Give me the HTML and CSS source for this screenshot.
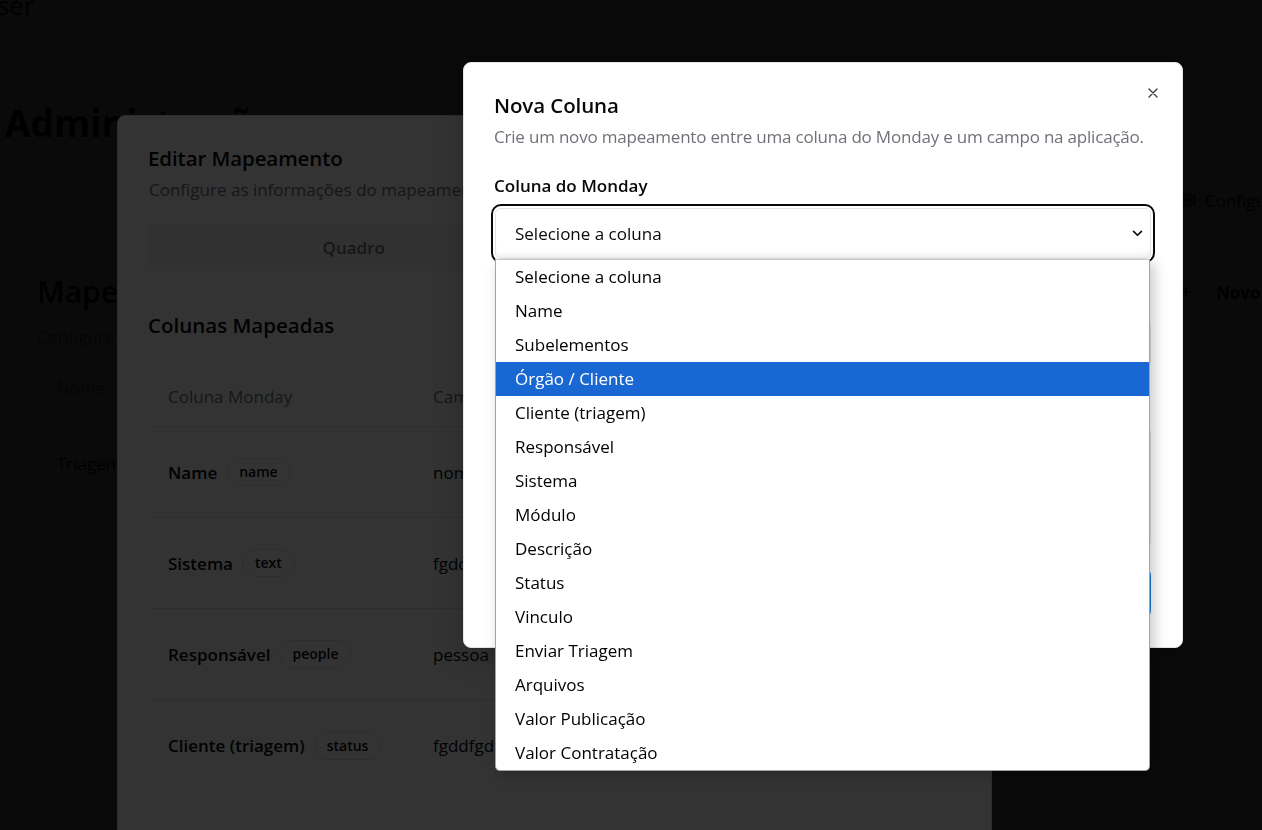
FILE: index.html
```html
<!DOCTYPE html>
<html lang="pt-BR">
<head>
<meta charset="utf-8">
<title>Administração - Mapeamentos</title>
<link rel="stylesheet" href="styles.css">
</head>
<body>
<div class="page">
  <div class="topline">User</div>
  <h1 class="page-title">Administração</h1>
  <div class="nav-row">
    <div class="nav-left"></div>
    <div class="nav-item">
      <svg class="ico" viewBox="0 0 24 24" width="16" height="16" fill="none" stroke="currentColor" stroke-width="2" stroke-linecap="round" stroke-linejoin="round"><path d="M12.22 2h-.44a2 2 0 0 0-2 2v.18a2 2 0 0 1-1 1.73l-.43.25a2 2 0 0 1-2 0l-.15-.08a2 2 0 0 0-2.73.73l-.22.38a2 2 0 0 0 .73 2.73l.15.1a2 2 0 0 1 1 1.72v.51a2 2 0 0 1-1 1.74l-.15.09a2 2 0 0 0-.73 2.73l.22.38a2 2 0 0 0 2.73.73l.15-.08a2 2 0 0 1 2 0l.43.25a2 2 0 0 1 1 1.73V20a2 2 0 0 0 2 2h.44a2 2 0 0 0 2-2v-.18a2 2 0 0 1 1-1.73l.43-.25a2 2 0 0 1 2 0l.15.08a2 2 0 0 0 2.73-.73l.22-.39a2 2 0 0 0-.73-2.73l-.15-.08a2 2 0 0 1-1-1.74v-.5a2 2 0 0 1 1-1.74l.15-.09a2 2 0 0 0 .73-2.73l-.22-.38a2 2 0 0 0-2.73-.73l-.15.08a2 2 0 0 1-2 0l-.43-.25a2 2 0 0 1-1-1.73V4a2 2 0 0 0-2-2z"/><circle cx="12" cy="12" r="3"/></svg>
      <span>Configurações</span>
    </div>
  </div>
  <section class="card">
    <div class="card-head">
      <div class="card-titles">
        <h2 class="card-title">Mapeamentos</h2>
        <p class="card-sub">Configure os mapeamentos entre quadros do Monday e a aplicação.</p>
      </div>
      <div class="new-btn">
        <svg class="ico" viewBox="0 0 24 24" width="16" height="16" fill="none" stroke="currentColor" stroke-width="2" stroke-linecap="round"><path d="M5 12h14M12 5v14"/></svg>
        <span>Novo Mapeamento</span>
      </div>
    </div>
    <div class="bg-table">
      <div class="bg-row bg-head"><span>Nome</span><span>Quadro</span></div>
      <div class="bg-row"><span>Triagem</span><span>1234567890</span></div>
    </div>
  </section>
</div>

<div class="overlay"></div>

<div class="dialog edit-dialog">
  <h2 class="dlg-title">Editar Mapeamento</h2>
  <p class="dlg-sub">Configure as informações do mapeamento e suas colunas.</p>
  <div class="tabs">
    <div class="tab">Quadro</div>
    <div class="tab active">Colunas</div>
  </div>
  <h3 class="section-title">Colunas Mapeadas</h3>
  <div class="map-table">
    <div class="mrow mhead"><span>Coluna Monday</span><span>Campo</span><span>Ações</span></div>
    <div class="mrow"><span class="mcell"><b>Name</b><i class="badge">name</i></span><span>nome</span><span></span></div>
    <div class="mrow"><span class="mcell"><b>Sistema</b><i class="badge">text</i></span><span>fgddfgdfgdfg</span><span></span></div>
    <div class="mrow"><span class="mcell"><b>Responsável</b><i class="badge">people</i></span><span>pessoa</span><span></span></div>
    <div class="mrow last"><span class="mcell"><b>Cliente (triagem)</b><i class="badge">status</i></span><span>fgddfgdfgdfg</span><span></span></div>
  </div>
</div>

<div class="overlay"></div>

<div class="dialog nova-dialog">
  <button class="close" aria-label="Fechar">
    <svg viewBox="0 0 24 24" width="16" height="16" fill="none" stroke="currentColor" stroke-width="2" stroke-linecap="round"><path d="M18 6 6 18M6 6l12 12"/></svg>
  </button>
  <h2 class="dlg-title">Nova Coluna</h2>
  <p class="dlg-sub tight">Crie um novo mapeamento entre uma coluna do Monday e um campo na aplicação.</p>
  <div class="form">
    <div class="field">
      <label class="label">Coluna do Monday</label>
      <div class="select-wrap">
        <div class="select">
          <span>Selecione a coluna</span>
          <svg class="chev" viewBox="0 0 12 8" width="11" height="7" fill="none" stroke="currentColor" stroke-width="2" stroke-linecap="round" stroke-linejoin="round"><path d="M1.5 1.5 6 6l4.5-4.5"/></svg>
        </div>
        <ul class="listbox" role="listbox">
          <li>Selecione a coluna</li>
          <li>Name</li>
          <li>Subelementos</li>
          <li class="hl">Órgão / Cliente</li>
          <li>Cliente (triagem)</li>
          <li>Responsável</li>
          <li>Sistema</li>
          <li>Módulo</li>
          <li>Descrição</li>
          <li>Status</li>
          <li>Vinculo</li>
          <li>Enviar Triagem</li>
          <li>Arquivos</li>
          <li>Valor Publicação</li>
          <li>Valor Contratação</li>
        </ul>
      </div>
    </div>
    <div class="field">
      <label class="label">Campo na Aplicação</label>
      <div class="input"></div>
    </div>
    <div class="field">
      <label class="label">Descrição</label>
      <div class="textarea"></div>
    </div>
    <div class="footer">
      <div class="btn outline">Cancelar</div>
      <div class="btn primary">Criar Coluna</div>
    </div>
  </div>
</div>
</body>
</html>
```
FILE: styles.css
```css
* { box-sizing: border-box; }
html, body { margin: 0; padding: 0; }
body {
  font-family: "Open Sans", "Noto Sans", sans-serif;
  color: #09090b;
  background: #ffffff;
  width: 1262px;
  height: 830px;
  overflow: hidden;
}

/* ---------- background page ---------- */
.page { padding-left: 5px; height: 830px; overflow: hidden; }
.topline {
  height: 20px; margin-top: -5px; margin-left: -27px;
  font-size: 26px; line-height: 20px; white-space: nowrap;
}
.page-title {
  margin: 86px 0 0; font-size: 37px; font-weight: 700;
  line-height: 44px; white-space: nowrap;
}
.nav-row {
  display: grid; grid-template-columns: 1176px auto;
  height: 40px; margin-top: 35px; align-items: center;
}
.nav-item { display: flex; align-items: center; gap: 8px; font-size: 17px; white-space: nowrap; }
.ico { flex: none; }
.card { margin-top: 22px; padding: 32px; width: 1500px; }
.card-head { display: grid; grid-template-columns: 1141px auto; align-items: start; }
.card-title { margin: 0; font-size: 30px; font-weight: 600; line-height: 36px; }
.card-sub { margin: 15px 0 0; font-size: 17px; line-height: 24px; color: #71717a; }
.new-btn { display: flex; align-items: center; gap: 22px; font-size: 17px; font-weight: 700; height: 36px; white-space: nowrap; }
.bg-table { margin-top: 11px; width: 1100px; }
.bg-row { display: grid; grid-template-columns: 400px 1fr; padding: 0 20px; height: 56px; align-items: center; font-size: 17px; border-bottom: 1px solid #e4e4e7; }
.bg-row + .bg-row { height: 96px; }
.bg-head { color: #71717a; }

/* ---------- overlays & dialogs ---------- */
.overlay { position: fixed; inset: 0; background: rgba(0, 0, 0, 0.8); }
.dialog { position: fixed; background: #fff; border-radius: 8px; }

.dlg-title { margin: 0 0 0 -1px; font-size: 20.5px; font-weight: 600; line-height: 28px; letter-spacing: -0.1px; }
.dlg-sub { margin: 6px 0 0; font-size: 17px; line-height: 24px; color: #71717a; white-space: nowrap; }
.dlg-sub.tight { letter-spacing: -0.2px; margin-left: -1px; }

.edit-dialog {
  left: 117px; top: 115px; width: 875px; height: 760px;
  padding: 28px 31px 30px;
  border: 1px solid #e4e4e7;
}
.tabs {
  margin-top: 21px; height: 48px; padding: 4px;
  background: #f4f4f5; border-radius: 6px;
  display: grid; grid-template-columns: 1fr 1fr;
}
.tab {
  display: flex; align-items: center; justify-content: center;
  font-size: 17px; font-weight: 600; color: #71717a; border-radius: 4px;
}
.tab.active { background: #fff; color: #09090b; }
.section-title { margin: 40px 0 0 -1px; font-size: 20.5px; font-weight: 600; line-height: 28px; }
.map-table { margin-top: 28px; }
.mrow {
  display: grid; grid-template-columns: 265px 1fr 120px;
  height: 91px; align-items: center;
  border-bottom: 1px solid #e4e4e7;
  font-size: 17px;
}
.mrow > span { padding: 0 20px 0 19px; white-space: nowrap; }
.mhead { height: 60px; color: #71717a; font-weight: 500; }
.mrow.last { border-bottom: none; }
.mcell { display: flex; align-items: center; gap: 9px; }
.mcell b { font-weight: 600; }
.badge {
  font-style: normal; font-size: 14px; font-weight: 600;
  height: 28px; line-height: 26px; padding: 0 12px;
  border: 1px solid #e4e4e7; border-radius: 999px;
}

/* ---------- nova coluna ---------- */
.nova-dialog {
  left: 463px; top: 62px; width: 720px; height: 586px;
  padding: 28px 31px 32px;
  border: 1px solid #e4e4e7;
  box-shadow: 0 10px 30px rgba(0,0,0,0.2);
}
.close {
  position: absolute; top: 22px; right: 21px;
  width: 16px; height: 16px; padding: 0; border: 0; background: none;
  color: #3f3f46; display: flex;
}
.form { margin-top: 25px; display: flex; flex-direction: column; gap: 26px; }
.field { display: flex; flex-direction: column; gap: 10px; }
.label { font-size: 17px; font-weight: 600; line-height: 24px; margin-left: -1px; }
.select-wrap { position: relative; }
.select {
  height: 51px; border: 1px solid #e4e4e7; border-radius: 6px;
  padding: 0 7px 0 19px;
  display: flex; align-items: center; justify-content: space-between;
  font-size: 17px; color: #09090b;
  outline: 2px solid #09090b; outline-offset: 2px;
  box-shadow: inset 0 -6px 8px -6px rgba(0,0,0,0.08);
}
.chev { color: #111; }
.listbox {
  position: absolute; top: 100%; left: 0; width: 655px;
  margin: 0; padding: 0; list-style: none;
  background: #fff;
  border: 1px solid #a3a3a3; border-top-color: #c8c8c8;
  border-radius: 0 0 5px 5px;
  box-shadow: 4px 4px 14px rgba(0,0,0,0.22);
  z-index: 10;
}
.listbox li {
  height: 34px; line-height: 34px; padding-left: 19px;
  font-size: 17px; color: #000;
}
.listbox li.hl { background: #1967d2; color: #fff; }
.input { height: 48px; border: 1px solid #e4e4e7; border-radius: 6px; }
.textarea { height: 120px; border: 1px solid #e4e4e7; border-radius: 6px; }
.footer { display: flex; justify-content: flex-end; gap: 10px; margin-top: -4px; }
.btn {
  height: 48px; padding: 0 22px; border-radius: 6px;
  display: flex; align-items: center; font-size: 17px; font-weight: 600;
}
.btn.outline { border: 1px solid #e4e4e7; }
.btn.primary { background: #1d7fe0; color: #fff; }
```
